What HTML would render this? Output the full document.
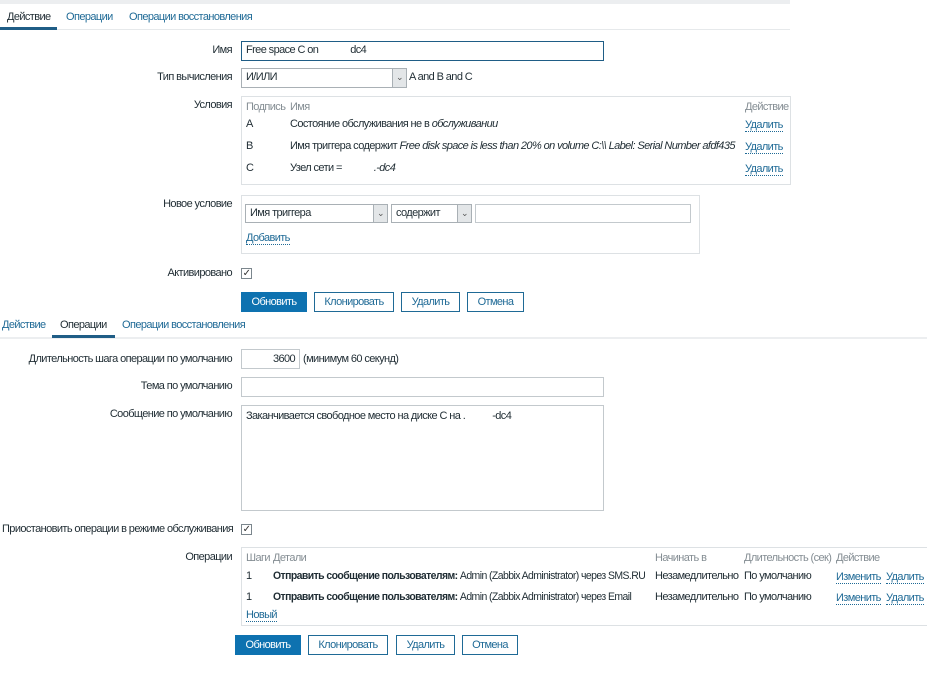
<!DOCTYPE html>
<html><head><meta charset="utf-8"><style>
*{box-sizing:border-box;margin:0;padding:0}
body{width:927px;height:688px;background:#fff;position:relative;overflow:hidden;font-family:"Liberation Sans",Arial,sans-serif;font-size:11px;color:#1f2c33;letter-spacing:-0.6px}
.a{position:absolute;white-space:nowrap;line-height:14px}
.r{text-align:right}
.lnk{color:#1f6a96}
.u{border-bottom:1px dotted #1f6a96;line-height:12px}
.g{color:#848d93}
.box{position:absolute;border:1px solid #dde1e4;background:#fff}
.inp{position:absolute;border:1px solid #c3c9cd;background:#fff}
.sel{position:absolute;border:1px solid #a9b0b5;background:#fff}
.arr{position:absolute;right:0;top:0;bottom:0;width:14px;background:#e3e6e8;border-left:1px solid #a9b0b5;font-size:9px;text-align:center;line-height:17px;color:#555}
.btn{position:absolute;height:20px;border:1px solid #1f6a96;color:#1f6a96;background:#fff;text-align:center;line-height:18px}
.btn.p{background:#0e72b0;color:#fff;border-color:#0e72b0}
.cb{position:absolute;width:11px;height:11px;border:1px solid #7b868d;background:#fff;font-size:10px;line-height:9px;text-align:center;color:#333}
.sq{transform:scaleX(0.95);transform-origin:left center}
i{font-style:italic}
</style></head><body>
<div style="position:absolute;left:0;top:0;width:790px;height:4px;background:#eceef0"></div>
<div class="a" style="left:7px;top:10px">Действие</div>
<div class="a lnk" style="left:66px;top:10px">Операции</div>
<div class="a lnk" style="left:129px;top:10px">Операции восстановления</div>
<div style="position:absolute;left:0;top:29px;width:790px;height:1px;background:#e6e9eb"></div>
<div style="position:absolute;left:0;top:27px;width:57px;height:3px;background:#1f5d86"></div>

<div class="a r" style="right:695px;top:43px">Имя</div>
<div class="inp" style="left:241px;top:41px;width:363px;height:20px;border-color:#1f5d86"></div>
<div class="a" style="left:246px;top:43px">Free space C on &nbsp;&nbsp;&nbsp;&nbsp;&nbsp;&nbsp;&nbsp;&nbsp;&nbsp;&nbsp;&nbsp; dc4</div>

<div class="a r" style="right:695px;top:70px">Тип вычисления</div>
<div class="sel" style="left:241px;top:68px;width:166px;height:20px"><div class="arr">&#8964;</div></div>
<div class="a" style="left:246px;top:70px">И/ИЛИ</div>
<div class="a" style="left:409px;top:70px">A and B and C</div>

<div class="a r" style="right:695px;top:98px">Условия</div>
<div class="box" style="left:241px;top:96px;width:550px;height:89px"></div>
<div class="a g" style="left:246px;top:100px">Подпись</div>
<div class="a g" style="left:290px;top:100px">Имя</div>
<div class="a g" style="left:745px;top:100px">Действие</div>
<div class="a" style="left:246px;top:117px">A</div>
<div class="a" style="left:290px;top:117px">Состояние обслуживания не в <i>обслуживании</i></div>
<div class="a" style="left:246px;top:139px">B</div>
<div class="a" style="left:290px;top:139px">Имя триггера содержит <i>Free disk space is less than 20% on volume C:\\ Label: Serial Number afdf435</i></div>
<div class="a" style="left:246px;top:161px">C</div>
<div class="a" style="left:290px;top:161px">Узел сети = &nbsp;&nbsp;&nbsp;&nbsp;&nbsp;&nbsp;&nbsp;&nbsp;&nbsp;&nbsp;&nbsp; <i>.-dc4</i></div>
<div class="a lnk" style="left:745px;top:118px"><span class="u">Удалить</span></div>
<div class="a lnk" style="left:745px;top:140px"><span class="u">Удалить</span></div>
<div class="a lnk" style="left:745px;top:162px"><span class="u">Удалить</span></div>

<div class="a r" style="right:695px;top:197px">Новое условие</div>
<div class="box" style="left:241px;top:195px;width:459px;height:59px"></div>
<div class="sel" style="left:245px;top:204px;width:143px;height:19px"><div class="arr">&#8964;</div></div>
<div class="a" style="left:250px;top:206px">Имя триггера</div>
<div class="sel" style="left:391px;top:204px;width:81px;height:19px"><div class="arr">&#8964;</div></div>
<div class="a" style="left:396px;top:206px">содержит</div>
<div class="inp" style="left:475px;top:204px;width:216px;height:19px"></div>
<div class="a lnk" style="left:246px;top:231px"><span class="u">Добавить</span></div>

<div class="a r" style="right:695px;top:266px">Активировано</div>
<div class="cb" style="left:241px;top:268px">&#10003;</div>

<div class="btn p" style="left:241px;top:292px;width:66px">Обновить</div>
<div class="btn" style="left:314px;top:292px;width:80px">Клонировать</div>
<div class="btn" style="left:401px;top:292px;width:59px">Удалить</div>
<div class="btn" style="left:467px;top:292px;width:57px">Отмена</div>

<div class="a lnk" style="left:2px;top:318px">Действие</div>
<div class="a" style="left:60px;top:318px">Операции</div>
<div class="a lnk" style="left:122px;top:318px">Операции восстановления</div>
<div style="position:absolute;left:0;top:337px;width:927px;height:2px;background:#eceef0"></div>
<div style="position:absolute;left:52px;top:335px;width:63px;height:3px;background:#1f5d86"></div>

<div class="a r" style="right:695px;top:352px">Длительность шага операции по умолчанию</div>
<div class="inp" style="left:241px;top:349px;width:59px;height:20px"></div>
<div class="a" style="left:273px;top:352px">3600</div>
<div class="a" style="left:303px;top:352px">(минимум 60 секунд)</div>

<div class="a r" style="right:695px;top:379px">Тема по умолчанию</div>
<div class="inp" style="left:241px;top:377px;width:363px;height:20px"></div>

<div class="a r" style="right:695px;top:407px">Сообщение по умолчанию</div>
<div class="inp" style="left:241px;top:405px;width:363px;height:106px"></div>
<div class="a" style="left:246px;top:409px">Заканчивается свободное место на диске C на . &nbsp;&nbsp;&nbsp;&nbsp;&nbsp;&nbsp;&nbsp;&nbsp;&nbsp; -dc4</div>

<div class="a" style="left:2px;top:522px">Приостановить операции в режиме обслуживания</div>
<div class="cb" style="left:241px;top:524px">&#10003;</div>

<div class="a r" style="right:695px;top:550px">Операции</div>
<div class="box" style="left:241px;top:547px;width:690px;height:79px"></div>
<div class="a g" style="left:246px;top:551px">Шаги</div>
<div class="a g" style="left:273px;top:551px">Детали</div>
<div class="a g" style="left:655px;top:551px">Начинать в</div>
<div class="a g" style="left:744px;top:551px">Длительность (сек)</div>
<div class="a g" style="left:836px;top:551px">Действие</div>
<div class="a" style="left:246px;top:569px">1</div>
<div class="a sq" style="left:273px;top:569px"><b>Отправить сообщение пользователям:</b> Admin (Zabbix Administrator) через SMS.RU</div>
<div class="a" style="left:655px;top:569px">Незамедлительно</div>
<div class="a" style="left:744px;top:569px">По умолчанию</div>
<div class="a lnk" style="left:836px;top:570px"><span class="u">Изменить</span></div>
<div class="a lnk" style="left:886px;top:570px"><span class="u">Удалить</span></div>
<div class="a" style="left:246px;top:590px">1</div>
<div class="a sq" style="left:273px;top:590px"><b>Отправить сообщение пользователям:</b> Admin (Zabbix Administrator) через Email</div>
<div class="a" style="left:655px;top:590px">Незамедлительно</div>
<div class="a" style="left:744px;top:590px">По умолчанию</div>
<div class="a lnk" style="left:836px;top:591px"><span class="u">Изменить</span></div>
<div class="a lnk" style="left:886px;top:591px"><span class="u">Удалить</span></div>
<div class="a lnk" style="left:246px;top:608px"><span class="u">Новый</span></div>

<div class="btn p" style="left:235px;top:635px;width:66px">Обновить</div>
<div class="btn" style="left:308px;top:635px;width:80px">Клонировать</div>
<div class="btn" style="left:396px;top:635px;width:59px">Удалить</div>
<div class="btn" style="left:462px;top:635px;width:56px">Отмена</div>
</body></html>
